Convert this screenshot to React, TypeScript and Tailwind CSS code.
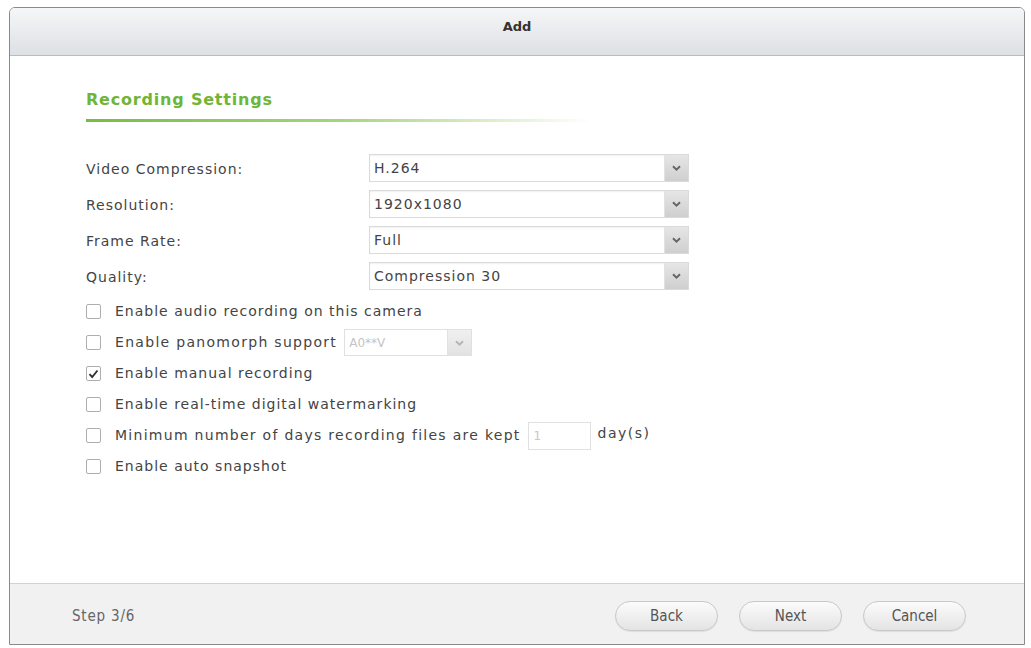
import React from "react";

const FONT = { fontFamily: '"DejaVu Sans", Verdana, sans-serif' };
const NARROW = { fontFamily: '"Liberation Sans Narrow", "DejaVu Sans Condensed", sans-serif' };

const FIELDS = [
  { label: "Video Compression:", value: "H.264" },
  { label: "Resolution:", value: "1920x1080" },
  { label: "Frame Rate:", value: "Full" },
  { label: "Quality:", value: "Compression 30" },
];

function Arrow({ disabled }: { disabled?: boolean }) {
  return (
    <div
      className={`flex w-[24px] shrink-0 items-center justify-center border-l border-[#e2e2e2] ${
        disabled ? "bg-gradient-to-b from-[#f0f0f0] to-[#e2e2e2]" : "bg-gradient-to-b from-[#e6e6e6] to-[#cfcfcf]"
      }`}
    >
      <svg width="9" height="6" viewBox="0 0 9 6">
        <path d="M1 1.2 L4.5 4.6 L8 1.2" fill="none" stroke={disabled ? "#b5b5b5" : "#666"} strokeWidth="2" />
      </svg>
    </div>
  );
}

function Select({ value }: { value: string }) {
  return (
    <div className="flex h-[28px] w-[320px] border border-[#dadada] bg-white shadow-[inset_0_1px_2px_rgba(0,0,0,0.06)]">
      <div className="flex flex-1 items-center px-[4px] text-[14px] tracking-[1px] text-[#444]">{value}</div>
      <Arrow />
    </div>
  );
}

function Check({ checked }: { checked?: boolean }) {
  return (
    <div className="flex h-[15px] w-[15px] shrink-0 items-center justify-center rounded-[2px] border border-[#aeaeae] bg-white">
      {checked && (
        <svg width="11" height="10" viewBox="0 0 11 10">
          <path d="M1.5 5.2 L4.2 8 L9.5 1.5" fill="none" stroke="#333" strokeWidth="1.9" />
        </svg>
      )}
    </div>
  );
}

function Btn({ children }: { children: React.ReactNode }) {
  return (
    <button
      style={NARROW}
      className="h-[30px] w-[103px] rounded-full border border-[#c8c8c8] bg-gradient-to-b from-[#fbfbfb] to-[#e4e4e4] text-[15px] text-[#555] shadow-[0_1px_1px_rgba(0,0,0,0.08)]"
    >
      {children}
    </button>
  );
}

export default function App() {
  return (
    <div className="h-[648px] w-[1031px] bg-white pl-[9px] pt-[7px]" style={FONT}>
      <div className="flex h-[638px] w-[1016px] flex-col overflow-hidden rounded-t-[6px] border border-[#8a8a8a]">
        <div className="flex h-[48px] shrink-0 items-start justify-center border-b border-[#b9bcc0] bg-gradient-to-b from-[#f5f6f8] to-[#dde0e4] pt-[9px]">
          <span className="text-[13px] font-bold text-[#333]">Add</span>
        </div>

        <div className="flex flex-1 flex-col bg-white pl-[76px] pt-[32px]">
          <div className="text-[16px] font-bold tracking-[0.8px] text-[#6fb536]">Recording Settings</div>
          <div className="mt-[7px] h-[3px] w-[505px] bg-gradient-to-r from-[#76bd3f] via-[#a6d47a] to-transparent" />

          <div className="mt-[32px] flex flex-col gap-[8px]">
            {FIELDS.map((f) => (
              <div key={f.label} className="flex items-center">
                <div className="w-[283px] pt-[2px] text-[14px] tracking-[1px] text-[#444]">{f.label}</div>
                <Select value={f.value} />
              </div>
            ))}
          </div>

          <div className="mt-[6px] flex flex-col text-[14px] tracking-[1px] text-[#444]">
            <div className="flex h-[31px] items-center gap-[14px]">
              <Check />
              <span>Enable audio recording on this camera</span>
            </div>
            <div className="flex h-[31px] items-center gap-[14px]">
              <Check />
              <span className="tracking-[1.3px]">Enable panomorph support</span>
              <div className="-ml-[7px] flex h-[27px] w-[128px] border border-[#e0e0e0] bg-white">
                <div className="flex flex-1 items-center px-[4px] text-[12px] tracking-normal text-[#c4c4c4]">A0**V</div>
                <Arrow disabled />
              </div>
            </div>
            <div className="flex h-[31px] items-center gap-[14px]">
              <Check checked />
              <span>Enable manual recording</span>
            </div>
            <div className="flex h-[31px] items-center gap-[14px]">
              <Check />
              <span>Enable real-time digital watermarking</span>
            </div>
            <div className="flex h-[31px] items-center gap-[14px]">
              <Check />
              <span className="tracking-[1.28px]">Minimum number of days recording files are kept</span>
              <div className="-ml-[7px] flex h-[28px] w-[63px] items-center border border-[#e0e0e0] bg-white px-[5px] text-[12px] text-[#c8c8c8]">
                1
              </div>
              <span className="-ml-[7px] -mt-[4px] tracking-[1.5px]">day(s)</span>
            </div>
            <div className="flex h-[31px] items-center gap-[14px]">
              <Check />
              <span>Enable auto snapshot</span>
            </div>
          </div>
        </div>

        <div className="flex h-[61px] shrink-0 items-center justify-between border-t border-[#d2d2d2] bg-[#f1f1f1] pl-[62px] pr-[58px] pt-[4px]">
          <span style={NARROW} className="text-[15px] tracking-[0.8px] text-[#666]">
            Step 3/6
          </span>
          <div className="flex gap-[21px]">
            <Btn>Back</Btn>
            <Btn>Next</Btn>
            <Btn>Cancel</Btn>
          </div>
        </div>
      </div>
    </div>
  );
}
